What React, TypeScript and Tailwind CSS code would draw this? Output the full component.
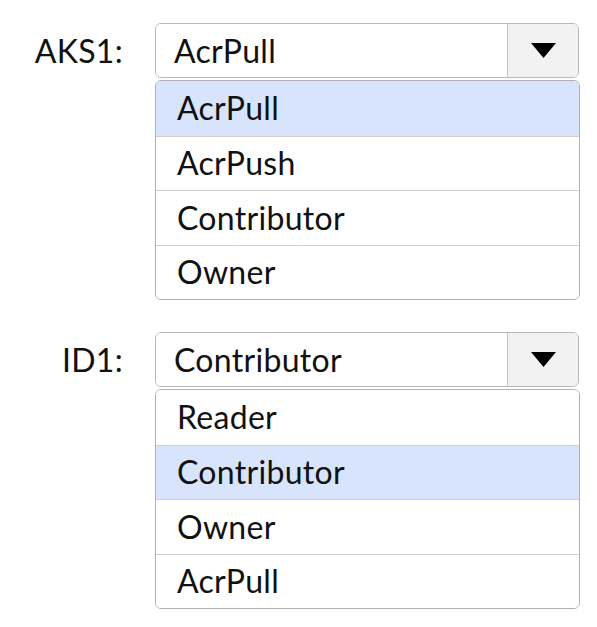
import React from "react";

type Group = { label: string; value: string; options: string[]; selected: number };

const groups: Group[] = [
  { label: "AKS1:", value: "AcrPull", options: ["AcrPull", "AcrPush", "Contributor", "Owner"], selected: 0 },
  { label: "ID1:", value: "Contributor", options: ["Reader", "Contributor", "Owner", "AcrPull"], selected: 1 },
];

function Triangle() {
  return (
    <svg width="25" height="15" viewBox="0 0 25 15">
      <polygon points="0,0 25,0 12.5,15" fill="#000" />
    </svg>
  );
}

export default function App() {
  return (
    <div
      className="w-[597px] h-[627px] bg-white pt-[23px] flex flex-col gap-[32px] text-[#111]"
      style={{ fontFamily: "Lato, 'Open Sans', sans-serif" }}
    >
      {groups.map((g) => (
        <div key={g.label} className="grid grid-cols-[123px_425px] gap-x-[32px]">
          <div className="h-[55px] flex items-center justify-end text-[32px] leading-none tracking-[0.3px]">{g.label}</div>
          <div className="flex flex-col gap-[2px]">
            <div className="w-[424px] h-[55px] flex border border-[#b8b8b8] rounded-[6px] overflow-hidden">
              <div className="flex-1 flex items-center pl-[18px] text-[32px] leading-none tracking-[0.3px] bg-white">{g.value}</div>
              <div className="w-[71px] flex items-center justify-center bg-[#f2f2f2] border-l border-[#c4c4c4]">
                <Triangle />
              </div>
            </div>
            <div className="w-[425px] border border-[#b0b0b0] rounded-[6px] overflow-hidden">
              {g.options.map((o, i) => (
                <div
                  key={o}
                  className={
                    "h-[54.5px] flex items-center pl-[21px] text-[32px] leading-none tracking-[0.3px] " +
                    (i > 0 ? "border-t border-[#cfcfcf] " : "") +
                    (i === g.selected ? "bg-[#d7e4fb]" : "bg-white")
                  }
                >
                  {o}
                </div>
              ))}
            </div>
          </div>
        </div>
      ))}
    </div>
  );
}
